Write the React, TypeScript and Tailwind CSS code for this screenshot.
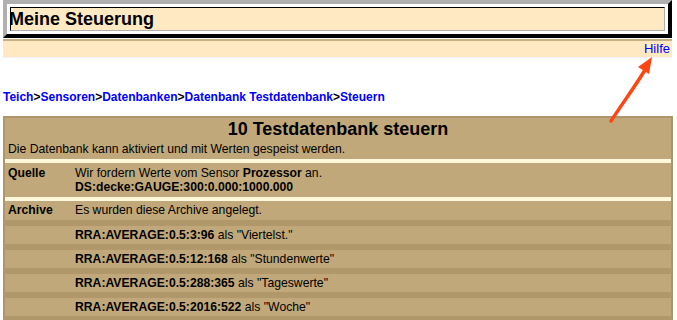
import React from 'react'

const crumbs = ['Teich', 'Sensoren', 'Datenbanken', 'Datenbank Testdatenbank', 'Steuern']

const archives = [
  { rra: 'RRA:AVERAGE:0.5:3:96', name: 'Viertelst.' },
  { rra: 'RRA:AVERAGE:0.5:12:168', name: 'Stundenwerte' },
  { rra: 'RRA:AVERAGE:0.5:288:365', name: 'Tageswerte' },
  { rra: 'RRA:AVERAGE:0.5:2016:522', name: 'Woche' },
]

const Row = ({ label, children, className }: { label?: string; children: React.ReactNode; className: string }) => (
  <div className={`flex bg-[#c0a87a] ${className}`}>
    <div className="w-[70px] shrink-0 pl-[3px] font-bold">{label}</div>
    <div>{children}</div>
  </div>
)

export default function App() {
  return (
    <div className="relative min-h-[320px] bg-white pl-[3px] pr-[5px] text-[12.2px] text-black [font-family:'Liberation_Sans',Arial,sans-serif]">
      {/* header box */}
      <div className="border-4 border-t-[#b0b0b0] border-l-[#b0b0b0] border-b-black border-r-black p-[3px]">
        <div className="h-[24px] border border-t-black border-l-black border-b-[#b0b0b0] border-r-[#b0b0b0] bg-[#ffe9c2] indent-[-2px] text-[18px] font-bold leading-[22px]">
          Meine Steuerung
        </div>
      </div>

      <div className="mt-[1px] border-t-2 border-b border-t-[#c9ae84] border-b-[#eef0f8] bg-[#ffe9c2] pr-[2px] text-right text-[13px] leading-[16px]">
        <a className="text-[#0000ff]">Hilfe</a>
      </div>

      <div className="mt-[32px] text-[12px] font-bold leading-[14px]">
        {crumbs.map((c, i) => (
          <React.Fragment key={c}>
            {i > 0 && '>'}
            <a className="text-[#0000ff]">{c}</a>
          </React.Fragment>
        ))}
      </div>

      {/* main box */}
      <div className="mt-[12px] mr-[-1px] border-[2px] border-[#ae966a] bg-[#b0986a]">
        <div className="bg-[#c0a87a] pb-[2px]">
          <div className="text-center text-[18px] font-bold leading-[23px]">10 Testdatenbank steuern</div>
          <div className="pl-[3px] leading-[16px]">Die Datenbank kann aktiviert und mit Werten gespeist werden.</div>
        </div>
        <div className="h-[4px] bg-[#fff8dc]" />
        <Row label="Quelle" className="pt-[3px] pb-[3px] leading-[14px]">
          <div>
            Wir fordern Werte vom Sensor <b>Prozessor</b> an.
          </div>
          <div className="font-bold">DS:decke:GAUGE:300:0.000:1000.000</div>
        </Row>
        <div className="h-[4px] bg-[#fff8dc]" />
        <Row label="Archive" className="h-[19px] items-center">
          Es wurden diese Archive angelegt.
        </Row>
        {archives.map((a) => (
          <Row key={a.rra} className="mt-[6px] h-[18px] items-center">
            <b>{a.rra}</b> als "{a.name}"
          </Row>
        ))}
        <div className="h-[6px]" />
      </div>

      <svg className="pointer-events-none absolute left-0 top-0" width="677" height="320">
        <path d="M611 121 C622 104 634 88 645 70" stroke="#ff4512" strokeWidth="3.5" strokeLinecap="round" fill="none" />
        <polygon points="652,57 638,67 649,74" fill="#ff4512" />
      </svg>
    </div>
  )
}
